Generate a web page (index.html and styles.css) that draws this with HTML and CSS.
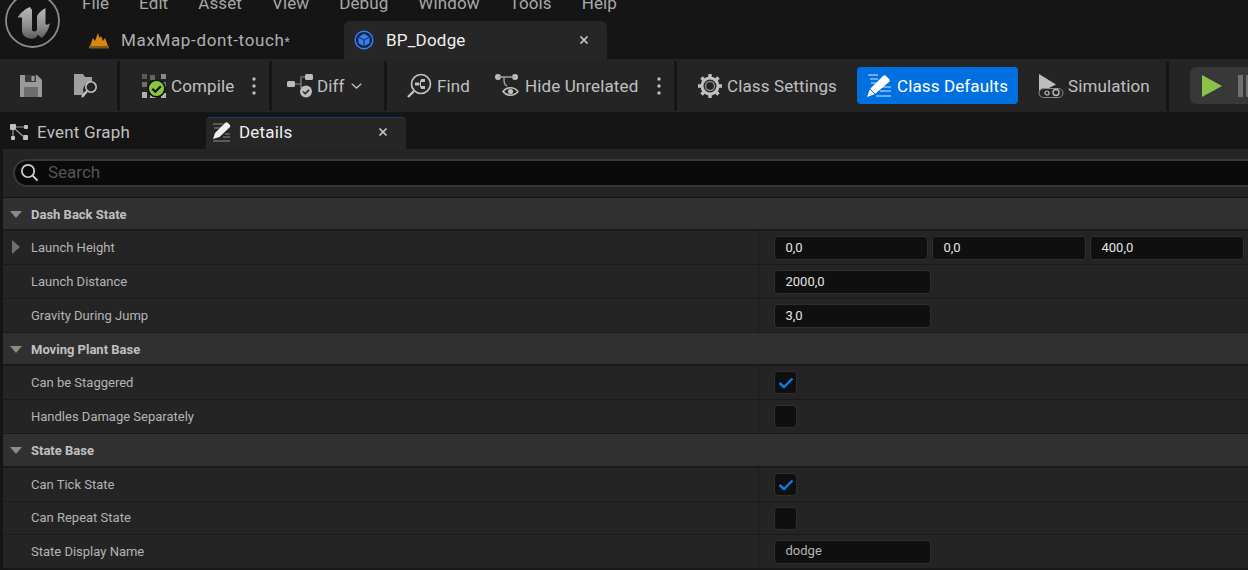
FILE: index.html
```html
<!DOCTYPE html>
<html lang="en">
  <head>
    <meta charset="UTF-8" />
    <title>BP_Dodge</title>
    <link rel="stylesheet" href="styles.css">
  </head>
  <body>
    <header class="title-bar">
      <svg class="logo" width="58" height="58" viewBox="4 -8 58 58">
        <defs>
          <linearGradient id="logoFill" x1="0" y1="0" x2="0" y2="1">
            <stop offset="0" stop-color="#b8b8b8" />
            <stop offset="0.6" stop-color="#8e8e8e" />
            <stop offset="1" stop-color="#5c5c5c" />
          </linearGradient>
        </defs>
        <circle cx="32.500" cy="20.500" r="26.500" fill="#141414" stroke="#8c8c8c" stroke-width="1.800" />
        <path d="M30 7C25 9 20 13 17.500 18c2-1 3.500-1 4.500 0v12c0 4 2 7 6 8 3 1 5 1 7 0l3-3 4 3c4-4 7-9 8-15-2 2-3.500 2-4.500 1V8c-4 2-7 5-8.500 8v14c-1.500 2-3.500 2-5 .5V10z" fill="url(#logoFill)" />
      </svg>
      <div class="title-main">
        <nav class="menu">
          <span>File</span><span>Edit</span><span>Asset</span><span>View</span><span>Debug</span><span>Window</span><span>Tools</span><span>Help</span>
        </nav>
        <div class="doc-tabs">
          <div class="doc-tab">
            <svg width="20" height="18" viewBox="0 0 20 18">
              <path d="M1 15 4 7l2 3 3-8 1.500 5L12 5l2 5 2-3 3 8z" fill="#d9860f" />
              <rect x="0" y="15" width="20" height="2.500" fill="#7d5a20" />
            </svg>
            <span class="map-name">MaxMap-dont-touch<small>*</small></span>
          </div>
          <div class="doc-tab active">
            <svg width="20" height="20" viewBox="0 0 20 20">
              <circle cx="10" cy="10" r="8.800" fill="#10274d" stroke="#3c7df0" stroke-width="1.400" />
              <path d="M10 3.800 15.500 7v6.200L10 16.300l-5.500-3.100V7z" fill="#3c7df0" />
              <path d="M4.800 7.200 10 10l5.200-2.800M10 10v6" fill="none" stroke="#10274d" stroke-width="1" />
            </svg>
            <span class="doc-name">BP_Dodge</span>
            <svg class="close" width="10" height="10" viewBox="0 0 10 10"><path d="M1.500 1.500l7 7M8.500 1.500l-7 7" stroke="#c8c8c8" stroke-width="1.700" /></svg>
          </div>
        </div>
      </div>
    </header>

    <div class="toolbar">
      <div class="tool-group save-group">
        <svg width="24" height="24" viewBox="0 0 24 24"><path d="M1 1h17l5 5v17H1z" fill="#9a9a9a" /><rect x="6" y="1" width="11" height="7" fill="#3a3a3a" /><rect x="12.500" y="2" width="3" height="5" fill="#9a9a9a" /><rect x="5" y="13" width="14" height="10" fill="#6d6d6d" /></svg>
        <svg width="26" height="26" viewBox="0 0 26 26"><path d="M1 1h9l2 3h7v5a8 8 0 0 0-7 13H1z" fill="#9f9f9f" /><circle cx="18" cy="14" r="5.200" fill="none" stroke="#c4c4c4" stroke-width="1.600" /><path d="M14 18 9 24" stroke="#c4c4c4" stroke-width="2.200" /></svg>
      </div>
      <div class="tool-group compile-group">
        <div class="tool tight">
          <svg width="26" height="26" viewBox="0 0 26 26">
            <path d="M1 1h5v5H1z" fill="#5a5a5a" />
            <path d="M9 2h5v5H9z" fill="#666" />
            <path d="M20 1h5v5h-5z" fill="#8a8a8a" />
            <path d="M1 9h5v5H1zM20 9h5v5h-5z" fill="#6e6e6e" />
            <path d="M1 19h5v6H1zM9 21h6v4H9zM20 20h5v5h-5z" fill="#b0b0b0" />
            <circle cx="15.500" cy="15.500" r="8.300" fill="#8cc63f" stroke="#10140c" stroke-width="1.500" />
            <path d="M11.300 15.700l3 3 5.500-5.500" fill="none" stroke="#10140c" stroke-width="2.200" />
          </svg>
          <span>Compile</span>
        </div>
        <svg class="dots" width="4" height="18" viewBox="0 0 4 18"><circle cx="2" cy="2" r="1.700" /><circle cx="2" cy="9" r="1.700" /><circle cx="2" cy="16" r="1.700" /></svg>
      </div>
      <div class="tool-group diff-group">
        <div class="tool tight">
          <svg width="26" height="24" viewBox="0 0 26 24">
            <rect x="0" y="7" width="8" height="6" rx="1.500" fill="#bdbdbd" />
            <rect x="18" y="0" width="8" height="6" rx="1.500" fill="#bdbdbd" />
            <path d="M8 10h6V3h4M14 10v4" fill="none" stroke="#8a8a8a" stroke-width="1.200" />
            <circle cx="19" cy="17.500" r="6" fill="#bdbdbd" />
            <path d="M16 17.500l2.200 2.200 3.800-3.800" fill="none" stroke="#242424" stroke-width="1.600" />
          </svg>
          <span>Diff</span>
          <svg class="chevron" width="11" height="6" viewBox="0 0 11 6"><path d="M.7.700 5.500 5l4.800-4.300" fill="none" stroke="#bdbdbd" stroke-width="1.400" /></svg>
        </div>
      </div>
      <div class="tool-group find-group">
        <div class="tool">
          <svg width="25" height="25" viewBox="0 0 25 25">
            <circle cx="14" cy="11" r="9.500" fill="none" stroke="#c0c0c0" stroke-width="1.700" />
            <path d="M7 18 1 24" stroke="#c0c0c0" stroke-width="2.400" />
            <rect x="8" y="9.500" width="4" height="3" fill="#c0c0c0" />
            <rect x="14" y="6" width="4" height="3" fill="#c0c0c0" />
            <rect x="14" y="13" width="4" height="3" fill="#c0c0c0" />
            <path d="M12 11h1.500M13.500 7.500v7" fill="none" stroke="#c0c0c0" stroke-width="1" />
          </svg>
          <span>Find</span>
        </div>
        <div class="tool tool-hide">
          <svg width="24" height="24" viewBox="0 0 24 24">
            <circle cx="3" cy="3" r="3" fill="#c0c0c0" /><circle cx="20" cy="3" r="3" fill="#c0c0c0" />
            <path d="M3 3h17M9 3c0 5 0 8 3 9" fill="none" stroke="#a0a0a0" stroke-width="1.400" />
            <path d="M8 17.500c4-5 11-5 15 0-4 5-11 5-15 0z" fill="none" stroke="#c0c0c0" stroke-width="1.500" />
            <circle cx="15.500" cy="17.500" r="2.600" fill="#c0c0c0" />
          </svg>
          <span>Hide Unrelated</span>
        </div>
        <svg class="dots dots-pull" width="4" height="18" viewBox="0 0 4 18"><circle cx="2" cy="2" r="1.700" /><circle cx="2" cy="9" r="1.700" /><circle cx="2" cy="16" r="1.700" /></svg>
      </div>
      <div class="tool-group class-group">
        <div class="tool">
          <svg width="24" height="24" viewBox="0 0 24 24">
            <circle cx="12" cy="12" r="8" fill="none" stroke="#c0c0c0" stroke-width="3" />
            <path d="M12 0v4M12 20v4M0 12h4M20 12h4M3.500 3.500l3 3M17.500 17.500l3 3M20.500 3.500l-3 3M6.500 17.500l-3 3" stroke="#c0c0c0" stroke-width="3.400" />
            <circle cx="12" cy="12" r="4.500" fill="none" stroke="#8a8a8a" stroke-width="1.500" />
          </svg>
          <span>Class Settings</span>
        </div>
        <div class="tool tight selected">
          <svg width="26" height="24" viewBox="0 0 26 24">
            <path d="M1 1h10M3 5h8M4 9h5M15 13h9M13 17h11M9 22h15" stroke="#8fc0f5" stroke-width="1.300" />
            <path d="M0 23l3-8L16 2c1-1 2-1 3 0l3 3c1 1 1 2 0 3L8 20z" fill="#fff" />
            <path d="M3 15l5 5" stroke="#0070e0" stroke-width="1" />
          </svg>
          <span>Class Defaults</span>
        </div>
        <div class="tool tight">
          <svg width="26" height="26" viewBox="0 0 26 26">
            <path d="M1 1l17 10.500L1 20z" fill="#bdbdbd" />
            <rect x="1" y="15.500" width="24" height="9" rx="4.500" fill="#242424" stroke="#8a8a8a" stroke-width="1" />
            <circle cx="9" cy="20" r="2" fill="none" stroke="#bdbdbd" stroke-width="1.200" />
            <circle cx="18" cy="19.500" r="3" fill="none" stroke="#bdbdbd" stroke-width="1.400" />
          </svg>
          <span>Simulation</span>
        </div>
      </div>
      <div class="play-group">
        <svg width="20" height="22" viewBox="0 0 20 22"><path d="M0 0l20 11L0 22z" fill="#8bc34a" /></svg>
        <div class="pause-bar"></div>
        <div class="pause-bar"></div>
      </div>
    </div>

    <div class="panel-tabs">
      <div class="panel-tab">
        <svg width="19" height="17" viewBox="0 0 19 17">
          <rect x="0" y="0" width="6" height="6" rx="1" fill="#c0c0c0" />
          <rect x="14" y="1" width="4" height="4" rx="1" fill="#c0c0c0" />
          <rect x="1" y="12" width="4" height="4" rx="1" fill="#c0c0c0" />
          <rect x="13" y="11" width="5" height="5" rx="1" fill="#c0c0c0" />
          <path d="M6 3h8M5 5l9 8M3 6v6" stroke="#9a9a9a" stroke-width="1.200" />
        </svg>
        <span>Event Graph</span>
      </div>
      <div class="panel-tab active">
        <svg width="19" height="20" viewBox="0 0 19 20">
          <path d="M1 2h10M2 6h7M13 12h5M11 15h7M1 19h17" stroke="#8d8d8d" stroke-width="1" />
          <path d="M1 17l2-6L13 1c1-1 2-1 3 0l1.500 1.500c1 1 1 2 0 3L7.500 15z" fill="#f0f0f0" />
        </svg>
        <span class="panel-name">Details</span>
        <svg class="close" width="10" height="10" viewBox="0 0 10 10"><path d="M1.500 1.500l7 7M8.500 1.500l-7 7" stroke="#c8c8c8" stroke-width="1.700" /></svg>
      </div>
    </div>

    <main class="details">
      <div class="search-row">
        <div class="search-box">
          <svg width="19" height="19" viewBox="0 0 20 20"><circle cx="8.500" cy="8.500" r="6.500" fill="none" stroke="#d0d0d0" stroke-width="1.800" /><path d="M13 13l5.500 5.500" stroke="#d0d0d0" stroke-width="2" /></svg>
          <span>Search</span>
        </div>
      </div>

      <div class="category"><i class="arrow-down"></i>Dash Back State</div>
      <div class="row">
        <div class="row-name"><i class="arrow-right"></i>Launch Height</div>
        <div class="row-value triple">
          <div class="field">0,0</div><div class="field">0,0</div><div class="field">400,0</div>
        </div>
      </div>
      <div class="row">
        <div class="row-name">Launch Distance</div>
        <div class="row-value"><div class="field wide">2000,0</div></div>
      </div>
      <div class="row">
        <div class="row-name">Gravity During Jump</div>
        <div class="row-value"><div class="field wide">3,0</div></div>
      </div>

      <div class="category"><i class="arrow-down"></i>Moving Plant Base</div>
      <div class="row">
        <div class="row-name">Can be Staggered</div>
        <div class="row-value"><div class="check"><svg width="16" height="12" viewBox="0 0 16 12"><path d="M1.500 6l4.500 4 8.500-8.500" fill="none" stroke="#0f7be6" stroke-width="2.400" /></svg></div></div>
      </div>
      <div class="row">
        <div class="row-name">Handles Damage Separately</div>
        <div class="row-value"><div class="check"></div></div>
      </div>

      <div class="category tall"><i class="arrow-down"></i>State Base</div>
      <div class="row">
        <div class="row-name">Can Tick State</div>
        <div class="row-value"><div class="check"><svg width="16" height="12" viewBox="0 0 16 12"><path d="M1.500 6l4.500 4 8.500-8.500" fill="none" stroke="#0f7be6" stroke-width="2.400" /></svg></div></div>
      </div>
      <div class="row short">
        <div class="row-name">Can Repeat State</div>
        <div class="row-value"><div class="check"></div></div>
      </div>
      <div class="row">
        <div class="row-name">State Display Name</div>
        <div class="row-value"><div class="field wide name-field">dodge</div></div>
      </div>
    </main>
  </body>
</html>
```

FILE: styles.css
```css
* {
  box-sizing: border-box;
}

html,
body {
  margin: 0;
  height: 570px;
  overflow: hidden;
}

body {
  font-family: Roboto, sans-serif;
  background: #151515;
  color: #c0c0c0;
}

svg {
  display: block;
  flex-shrink: 0;
}

/* title bar */
.title-bar {
  display: flex;
  height: 59px;
  background: #151515;
  overflow: hidden;
}

.logo {
  margin: -8px 0 0 4px;
}

.title-main {
  margin-left: 20px;
  flex: 1;
}

.menu {
  display: flex;
  gap: 30px;
  height: 14px;
  margin-top: -7px;
  margin-bottom: 14px;
  font-size: 17px;
  line-height: 20px;
  letter-spacing: 0.1px;
  color: #a8a8a8;
}

.doc-tabs {
  display: flex;
  height: 38px;
}

.doc-tab {
  display: flex;
  align-items: center;
  width: 262px;
  padding-left: 7px;
  gap: 12px;
  font-size: 17px;
  letter-spacing: 0.2px;
  color: #b0b0b0;
}

.map-name {
  letter-spacing: 0.65px;
}

.map-name small {
  font-size: 12px;
}

.doc-tab.active {
  width: 263px;
  padding-left: 10px;
  background: #262626;
  border-radius: 6px 6px 0 0;
  color: #f0f0f0;
}

.doc-name {
  flex: 1;
}

.close {
  margin-right: 18px;
}

/* toolbar */
.toolbar {
  display: flex;
  align-items: center;
  height: 53px;
  background: #242424;
  font-size: 17px;
  letter-spacing: 0.12px;
  overflow: hidden;
}

.tool-group {
  display: flex;
  align-items: center;
  flex: none;
  height: 50px;
  border-right: 3px solid #151515;
}

.tool {
  display: flex;
  align-items: center;
  gap: 5px;
  height: 37px;
  white-space: nowrap;
}

.tool.tight {
  gap: 4px;
}

.dots {
  fill: #bdbdbd;
}

.dots-pull {
  margin-left: -6px;
}

.chevron {
  margin-left: 2px;
}

.save-group {
  width: 120px;
  padding-left: 19px;
  gap: 30px;
}

.compile-group {
  width: 152px;
  padding-left: 21px;
  gap: 18px;
}

.diff-group {
  width: 115px;
  padding-left: 15px;
}

.find-group {
  width: 290px;
  padding-left: 20px;
  gap: 25px;
}

.tool-hide {
  gap: 6px;
}

.class-group {
  width: 492px;
  padding-left: 21px;
  gap: 20px;
}

.tool.selected {
  width: 161px;
  padding-left: 10px;
  background: #0070e0;
  border-radius: 4px;
  color: #fff;
}

.play-group {
  display: flex;
  align-items: center;
  flex: none;
  width: 80px;
  height: 37px;
  margin-left: 21px;
  padding-left: 12px;
  gap: 3px;
  background: #383838;
  border-radius: 6px;
}

.play-group svg {
  margin-right: 13px;
}

.pause-bar {
  width: 5px;
  height: 22px;
  background: #707070;
}

/* panel tabs */
.panel-tabs {
  display: flex;
  height: 37px;
  padding-top: 5px;
  font-size: 17px;
  letter-spacing: 0.2px;
}

.panel-tab {
  display: flex;
  align-items: center;
  gap: 8px;
  width: 206px;
  padding: 0 0 2px 10px;
}

.panel-tab.active {
  width: 200px;
  padding: 0 0 4px 6px;
  background: #262626;
  border-top: 1px solid #10406f;
  border-radius: 4px 4px 0 0;
  color: #f0f0f0;
}

.panel-name {
  flex: 1;
}

.panel-tab .close {
  margin-right: 18px;
}

/* details panel */
.details {
  padding-left: 3px;
  background: #151515;
}

.search-row {
  height: 49px;
  padding: 10px 0 0 10px;
  background: #242424;
  border-bottom: 1px solid #151515;
  overflow: hidden;
}

.search-box {
  display: flex;
  align-items: center;
  gap: 9px;
  height: 28px;
  margin-right: -20px;
  padding: 0 0 3px 5px;
  background: #0a0a0a;
  border: 2px solid #383838;
  border-radius: 14px;
  font-size: 17px;
  color: #555;
}

.search-box svg {
  margin-top: 2px;
}

.category {
  display: flex;
  align-items: center;
  height: 33px;
  padding: 1px 0 0 7px;
  background: #303030;
  border-bottom: 2px solid #1a1a1a;
  font-size: 13px;
  font-weight: 700;
  color: #c0c0c0;
}

.category.tall {
  height: 34px;
}

.arrow-down {
  width: 0;
  height: 0;
  margin-right: 9px;
  border-left: 6px solid transparent;
  border-right: 6px solid transparent;
  border-top: 7px solid #8a8a8a;
}

.arrow-right {
  position: absolute;
  left: 12px;
  width: 0;
  height: 0;
  border-top: 7px solid transparent;
  border-bottom: 7px solid transparent;
  border-left: 8px solid #6f6f6f;
}

.row {
  display: flex;
  height: 34px;
  background: #242424;
  border-bottom: 1px solid #1a1a1a;
}

.row.short {
  height: 33px;
}

.row-name {
  display: flex;
  align-items: center;
  width: 756px;
  padding: 0 0 1px 28px;
  border-right: 1px solid #1a1a1a;
  font-size: 13px;
  color: #b4b4b4;
}

.row-value {
  display: flex;
  align-items: center;
  flex: 1;
  padding-left: 15px;
}

.triple {
  gap: 4px;
}

.field {
  display: flex;
  align-items: center;
  width: 154px;
  height: 24px;
  padding: 0 0 1px 10.500px;
  background: #0f0f0f;
  border: 1.500px solid #2e2e2e;
  border-radius: 4px;
  font-size: 13px;
  color: #e4e4e4;
}

.field.wide {
  width: 157px;
}

.name-field {
  padding-bottom: 3px;
  color: #b4b4b4;
}

.check {
  display: flex;
  align-items: center;
  justify-content: center;
  width: 23px;
  height: 23px;
  background: #0f0f0f;
  border: 1.500px solid #2e2e2e;
  border-radius: 4px;
}
```
